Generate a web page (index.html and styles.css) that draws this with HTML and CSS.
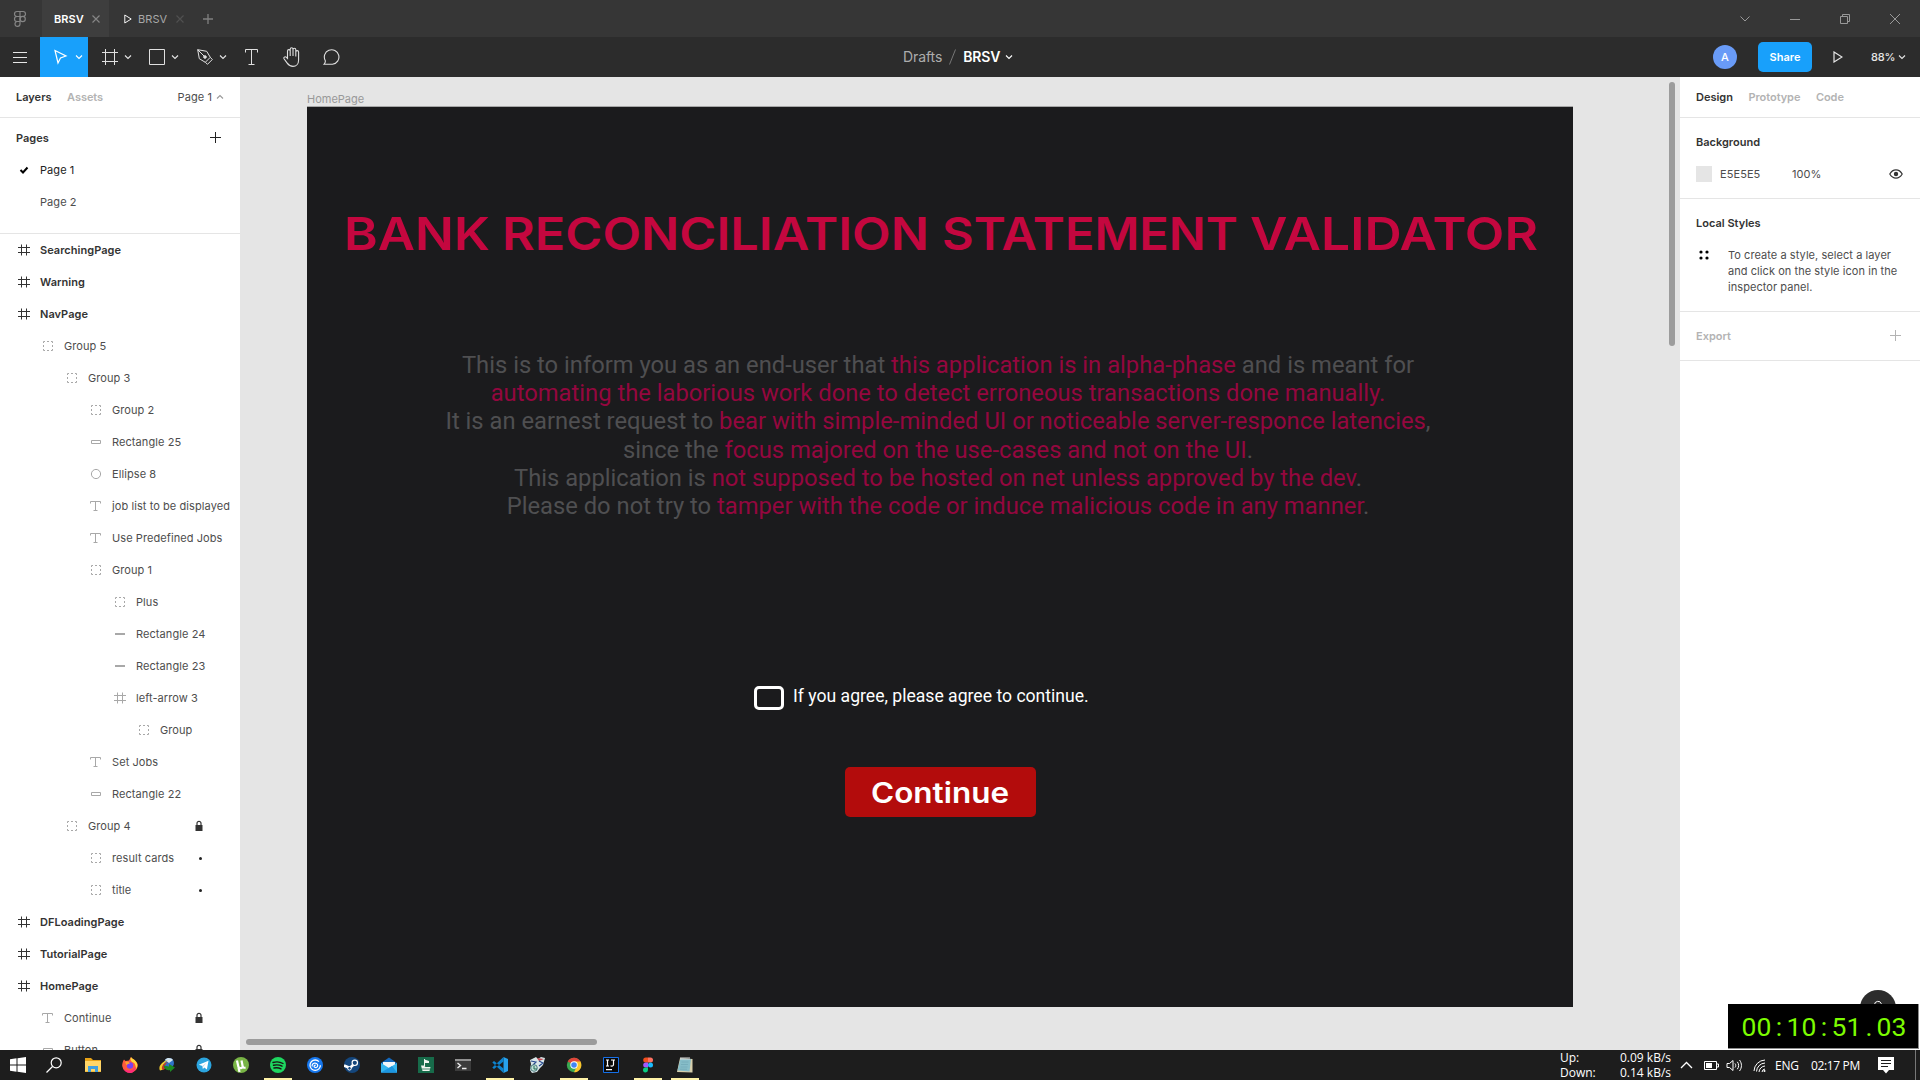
FILE: index.html
```html
<!DOCTYPE html>
<html lang="en">
<head>
<meta charset="utf-8">
<title>BRSV</title>
<link rel="stylesheet" href="styles.css">
</head>
<body>
<svg class="defs" aria-hidden="true">
  <symbol id="i-frame" viewBox="0 0 16 16"><path d="M5.500 2.500v11M10.500 2.500v11M2 5.500h12M2 10.500h12" fill="none" stroke="currentColor"/></symbol>
  <symbol id="i-group" viewBox="0 0 16 16"><path d="M3.500 5V3.500H5M7 3.500h2M11 3.500h1.500V5M12.500 7v2M12.500 11v1.500H11M9 12.500H7M5 12.500H3.500V11M3.500 9V7" fill="none" stroke="currentColor"/></symbol>
  <symbol id="i-rect" viewBox="0 0 16 16"><path d="M3.500 6.500h9v3h-9z" fill="none" stroke="currentColor"/></symbol>
  <symbol id="i-line" viewBox="0 0 16 16"><path d="M3 8h10" stroke="currentColor" stroke-width="2"/></symbol>
  <symbol id="i-ellipse" viewBox="0 0 16 16"><circle cx="8" cy="8" r="4.600" fill="none" stroke="currentColor"/></symbol>
  <symbol id="i-text" viewBox="0 0 16 16"><path d="M2.500 5.500v-2h10v2M7.500 3.500v9M5.500 12.500h4" fill="none" stroke="currentColor"/></symbol>
  <symbol id="i-lock" viewBox="0 0 8 12"><path d="M2 5V3.300a2 2 0 0 1 4 0V5" fill="none" stroke="currentColor" stroke-width="1.200"/><path d="M.5 5h7v6h-7z" fill="currentColor"/></symbol>
  <symbol id="i-chev" viewBox="0 0 8 8"><path d="M1 2.500l3 3 3-3" fill="none" stroke="currentColor" stroke-width="1.100"/></symbol>
  <symbol id="i-play" viewBox="0 0 10 12"><path d="M1 1l8 5-8 5z" fill="none" stroke="currentColor" stroke-width="1.200"/></symbol>
  <symbol id="i-x" viewBox="0 0 8 8"><path d="M.5.5l7 7M7.500.5l-7 7" stroke="currentColor" stroke-width="1.200"/></symbol>
</svg>

<header class="tabs">
  <div class="tab-logo"><svg width="14" height="18" viewBox="0 0 14 18" fill="none" stroke="#858585" stroke-width="1.200"><path d="M7 1.500H4a2.500 2.500 0 0 0 0 5h3zM7 1.500h3a2.500 2.500 0 0 1 0 5H7zM7 6.500H4a2.500 2.500 0 0 0 0 5h3zM7 11.500H4A2.500 2.500 0 1 0 7 14z"/><circle cx="9.700" cy="9" r="2.600"/></svg></div>
  <div class="tab tab-on"><span>BRSV</span><svg width="8" height="8"><use href="#i-x"/></svg></div>
  <div class="tab tab-off"><svg class="tab-play" width="8" height="10"><use href="#i-play"/></svg><span>BRSV</span><svg class="dim" width="8" height="8"><use href="#i-x"/></svg></div>
  <svg class="tab-add" width="10" height="10" viewBox="0 0 10 10"><path d="M5 0v10M0 5h10" stroke="#808080" stroke-width="1.300"/></svg>
  <div class="win">
    <svg width="50" height="20" viewBox="0 0 50 20"><path d="M20.500 7.500l4.500 4.500 4.500-4.500"/></svg>
    <svg width="50" height="20" viewBox="0 0 50 20"><path d="M20 10.500h10"/></svg>
    <svg width="50" height="20" viewBox="0 0 50 20"><path d="M20.500 7.500h7v7h-7zM22.500 7V5.500h7v7H28"/></svg>
    <svg width="50" height="20" viewBox="0 0 50 20"><path d="M20 5l10 10M30 5L20 15"/></svg>
  </div>
</header>

<nav class="toolbar">
  <div class="tool menu"><svg width="14" height="12" viewBox="0 0 14 12"><path d="M0 1.500h14M0 6.500h14M0 11.500h14" stroke="#e6e6e6"/></svg></div>
  <div class="tool active"><svg width="16" height="16" viewBox="0 0 16 16"><path d="M2 1.500l11 5.500-5.500 2-2.500 5z" fill="none" stroke="#fff" stroke-width="1.200"/></svg><svg width="8" height="8"><use href="#i-chev"/></svg></div>
  <div class="tool pair"><svg width="16" height="16" viewBox="0 0 16 16"><path d="M3.500 0v16M12.500 0v16M0 3.500h16M0 12.500h16" stroke="#e0e0e0"/></svg><svg width="8" height="8"><use href="#i-chev"/></svg></div>
  <div class="tool pair"><svg width="16" height="16" viewBox="0 0 16 16"><path d="M.5.5h15v15H.5z" fill="none" stroke="#e0e0e0"/></svg><svg width="8" height="8"><use href="#i-chev"/></svg></div>
  <div class="tool pair"><svg width="16" height="16" viewBox="0 0 16 16" fill="none" stroke="#e0e0e0"><path d="M.7.7l9 1.600 3.600 6-5 5-6-3.600zM.7.7l6.500 6.500M13.300 8.300l2 2.200-4.800 4.800-2.200-2"/><circle cx="8" cy="8" r="1.300" fill="#e0e0e0"/></svg><svg width="8" height="8"><use href="#i-chev"/></svg></div>
  <div class="tool solo type"><svg width="14" height="16" viewBox="0 0 14 16"><path d="M.5 3.500v-3h12v3M6.500 .5v15M3.500 15.500h6" fill="none" stroke="#e0e0e0"/></svg></div>
  <div class="tool solo"><svg width="20" height="20" viewBox="0 0 20 20" fill="none" stroke="#e0e0e0" stroke-width="1.100"><path d="M5.500 11.500V4a1.300 1.300 0 0 1 2.700 0v5V2.200a1.400 1.400 0 0 1 2.800 0V9 2.700a1.400 1.400 0 0 1 2.800 0V9.500 5a1.400 1.400 0 0 1 2.800 0v8c0 4-2.500 6.400-5.600 6.400-3.500 0-4.500-1.400-6-3.500l-3-4.200c-.8-1.200 1-2.600 2.200-1.500z"/></svg></div>
  <div class="tool solo"><svg width="18" height="16" viewBox="0 0 18 16"><path d="M1 15.300c1-1 1.500-2.300 1.300-3.600A7.300 7.300 0 1 1 9.500 15.300z" fill="none" stroke="#e0e0e0" stroke-width="1.100"/></svg></div>
  <div class="crumbs"><span class="muted">Drafts</span><svg class="slash" width="7" height="16" viewBox="0 0 7 16"><path d="M6.500.5l-6 15" stroke="#777"/></svg><strong>BRSV</strong><svg width="8" height="8"><use href="#i-chev"/></svg></div>
  <div class="actions">
    <span class="avatar">A</span><span class="share">Share</span>
    <svg class="present" width="10" height="12"><use href="#i-play"/></svg>
    <span class="pct">88%</span><svg width="8" height="8"><use href="#i-chev"/></svg>
  </div>
</nav>

<main class="work">
  <aside class="left">
    <div class="panel-head"><b>Layers</b><b class="faint">Assets</b><span class="page-pick">Page 1<svg class="flip" width="8" height="8"><use href="#i-chev"/></svg></span></div>
    <section class="pages">
      <div class="pages-head"><b>Pages</b><svg width="11" height="11" viewBox="0 0 11 11"><path d="M5.500 0v11M0 5.500h11" stroke="#222"/></svg></div>
      <div class="row"><svg width="16" height="16" viewBox="0 0 16 16"><path d="M4.500 8l2.500 2.500 4.500-5" fill="none" stroke="#000" stroke-width="2"/></svg><span class="cur">Page 1</span></div>
      <div class="row"><i class="blank"></i><span>Page 2</span></div>
    </section>
    <section class="layers">
      <div class="row top"><svg><use href="#i-frame"/></svg><span>SearchingPage</span></div>
      <div class="row top"><svg><use href="#i-frame"/></svg><span>Warning</span></div>
      <div class="row top"><svg><use href="#i-frame"/></svg><span>NavPage</span></div>
      <div class="row d1"><svg><use href="#i-group"/></svg><span>Group 5</span></div>
      <div class="row d2"><svg><use href="#i-group"/></svg><span>Group 3</span></div>
      <div class="row d3"><svg><use href="#i-group"/></svg><span>Group 2</span></div>
      <div class="row d3"><svg><use href="#i-rect"/></svg><span>Rectangle 25</span></div>
      <div class="row d3"><svg><use href="#i-ellipse"/></svg><span>Ellipse 8</span></div>
      <div class="row d3"><svg><use href="#i-text"/></svg><span>job list to be displayed</span></div>
      <div class="row d3"><svg><use href="#i-text"/></svg><span>Use Predefined Jobs</span></div>
      <div class="row d3"><svg><use href="#i-group"/></svg><span>Group 1</span></div>
      <div class="row d4"><svg><use href="#i-group"/></svg><span>Plus</span></div>
      <div class="row d4"><svg><use href="#i-line"/></svg><span>Rectangle 24</span></div>
      <div class="row d4"><svg><use href="#i-line"/></svg><span>Rectangle 23</span></div>
      <div class="row d4"><svg><use href="#i-frame"/></svg><span>left-arrow 3</span></div>
      <div class="row d5"><svg><use href="#i-group"/></svg><span>Group</span></div>
      <div class="row d3"><svg><use href="#i-text"/></svg><span>Set Jobs</span></div>
      <div class="row d3"><svg><use href="#i-rect"/></svg><span>Rectangle 22</span></div>
      <div class="row d2"><svg><use href="#i-group"/></svg><span>Group 4</span><svg class="lock"><use href="#i-lock"/></svg></div>
      <div class="row d3"><svg><use href="#i-group"/></svg><span>result cards</span><i class="dot"></i></div>
      <div class="row d3"><svg><use href="#i-group"/></svg><span>title</span><i class="dot"></i></div>
      <div class="row top"><svg><use href="#i-frame"/></svg><span>DFLoadingPage</span></div>
      <div class="row top"><svg><use href="#i-frame"/></svg><span>TutorialPage</span></div>
      <div class="row top"><svg><use href="#i-frame"/></svg><span>HomePage</span></div>
      <div class="row d1"><svg><use href="#i-text"/></svg><span>Continue</span><svg class="lock"><use href="#i-lock"/></svg></div>
      <div class="row d1"><svg><use href="#i-rect"/></svg><span>Button</span><svg class="lock"><use href="#i-lock"/></svg></div>
    </section>
  </aside>

  <section class="canvas">
    <div class="frame-name">HomePage</div>
    <div class="artboard">
      <svg class="title" width="1200" height="60"><text y="43"><tspan x="-1" textLength="146" lengthAdjust="spacingAndGlyphs">BANK</tspan> <tspan x="157" textLength="427" lengthAdjust="spacingAndGlyphs">RECONCILIATION</tspan> <tspan x="597" textLength="296" lengthAdjust="spacingAndGlyphs">STATEMENT</tspan> <tspan x="905" textLength="288" lengthAdjust="spacingAndGlyphs">VALIDATOR</tspan></text></svg>
      <p class="notice">This is to inform you as an end-user that <em>this application is in alpha-phase</em> and is meant for<br>
        <em>automating the laborious work done to detect erroneous transactions done manually.</em><br>
        It is an earnest request to <em>bear with simple-minded UI or noticeable server-responce latencies</em>,<br>
        since the <em>focus majored on the use-cases and not on the UI</em>.<br>
        This application is <em>not supposed to be hosted on net unless approved by the dev</em>.<br>
        Please do not try to <em>tamper with the code or induce malicious code in any manner</em>.</p>
      <div class="agree"><span class="box"></span><span class="agree-text">If you agree, please agree to continue.</span></div>
      <div class="btn"><svg width="138" height="50"><text x="0" y="36" textLength="138" lengthAdjust="spacingAndGlyphs">Continue</text></svg></div>
    </div>
    <div class="scroll-y"></div>
    <div class="scroll-x"></div>
  </section>

  <aside class="right">
    <div class="panel-head"><b>Design</b><b class="faint">Prototype</b><b class="faint">Code</b></div>
    <section class="bg">
      <b>Background</b>
      <div class="bg-row"><i class="swatch"></i><span class="hex">E5E5E5</span><span class="alpha">100%</span>
        <svg width="14" height="10" viewBox="0 0 14 10"><path d="M.8 5C2.500 2 4.500.9 7 .9S11.500 2 13.200 5C11.500 8 9.500 9.100 7 9.100S2.500 8 .8 5z" fill="none" stroke="#333" stroke-width="1.200"/><circle cx="7" cy="5" r="2.200" fill="#333"/></svg></div>
    </section>
    <section class="styles">
      <b>Local Styles</b>
      <div class="tip"><svg width="10" height="10" viewBox="0 0 10 10"><circle cx="2" cy="2" r="1.600"/><circle cx="8" cy="2" r="1.600"/><circle cx="2" cy="8" r="1.600"/><circle cx="8" cy="8" r="1.600"/></svg>
        <p>To create a style, select a layer<br>and click on the style icon in the<br>inspector panel.</p></div>
    </section>
    <section class="export"><b>Export</b><svg width="11" height="11" viewBox="0 0 11 11"><path d="M5.500 0v11M0 5.500h11" stroke="#b3b3b3"/></svg></section>
  </aside>
</main>

<div class="help"><svg width="36" height="36" viewBox="0 0 36 36"><path d="M14.500 15a3.500 3.500 0 1 1 5 3c-1 .5-1.500 1-1.500 2.500" fill="none" stroke="#fff"/></svg></div>
<div class="timer"><svg width="190" height="44"><text x="21 36 51 66 81 96 111 126 141 156 171" y="32">00:10:51.03</text></svg></div>

<footer class="taskbar">
  <div class="start"><svg width="16" height="16" viewBox="0 0 16 16"><path d="M0 2.200l6.500-.9v6.200H0zM7.500 1.200L16 0v7.500H7.500zM0 8.500h6.500v6.200L0 13.800zM7.500 8.500H16V16l-8.500-1.200z" fill="#fff"/></svg></div>
  <div class="start"><svg width="16" height="16" viewBox="0 0 16 16"><circle cx="10.200" cy="5.800" r="5" fill="none" stroke="#fff" stroke-width="1.200"/><path d="M6.500 9.500L.5 15.500" stroke="#fff" stroke-width="1.300"/></svg></div>
  <div class="apps">
    <div class="app"><svg viewBox="0 0 16 16"><path d="M0 1h6l2 2h8v12H0z" fill="#e8a317"/><path d="M0 4h16v10.500H0z" fill="#ffd567"/><path d="M3 15V9h10v6h-3v-3H6v3z" fill="#3f9fe0"/></svg></div>
    <div class="app"><svg viewBox="0 0 16 16"><path d="M9 0c1 2 3 2 4.500 4C15 5 16 7 15.800 9a7.900 7.900 0 0 1-15.600 0C0 6.500 1 4 2 2.500L3.500 4 7 3.500z" fill="#ff5a3c"/><path d="M9 0c1 2 3 2 4.500 4 2 2 2.300 5 1 7.500C13 9 14 6 10 5 8.500 3.500 8 2 9 0z" fill="#ffd93b"/><path d="M1 11c2 3 9 4 12-1 0 4-2 6-5 6s-6-2-7-5z" fill="#ff2b7a"/><circle cx="8" cy="8.500" r="3.200" fill="#7a3ff2"/><path d="M3 5c3-1 4 0 5 1.500-2 0-3 1-3.500 2z" fill="#ffa02e"/></svg></div>
    <div class="app"><svg viewBox="0 0 16 16"><circle cx="10" cy="6" r="5" fill="#2f72c9"/><path d="M6 3c2-3 7-2 8 0l-4 3z" fill="#d5e6ef"/><path d="M1 13.500C-1.500 9 4 4 9 3 4.500 6 3 9 4.500 12.500z" fill="#f2ca2d"/><path d="M3.500 13c-2-3 1-7 5.500-8-3 2-4 5-3 7z" fill="#c33a29"/><path d="M4.500 8.500l5.500 1V7l6 3.500-5 4.500v-2c-3.500 1-6-1.500-6.500-4.500z" fill="#1c8a24"/></svg></div>
    <div class="app"><svg viewBox="0 0 16 16"><circle cx="8" cy="8" r="7.500" fill="#2ca5df"/><path d="M2.800 7.800l9.700-4-1.600 8.600-2.600-2-1.400 1.500-.4-2.800z" fill="#fff"/><path d="M6.500 9l4.200-3.500-3.500 4.200-.3 2.200z" fill="#b8d8ea"/></svg></div>
    <div class="app"><svg viewBox="0 0 16 16"><circle cx="8" cy="8" r="8" fill="#78b445"/><path d="M4 3.500l1.300 6c.5 2.500 4.700 2 4.300-.5L8.500 3.500M9.600 9c.4 1.800 1.200 2 3 1.500M5.500 10.500L6.500 15" fill="none" stroke="#fff" stroke-width="2.200"/></svg></div>
    <div class="app on"><svg viewBox="0 0 16 16"><circle cx="8" cy="8" r="8" fill="#1ed760"/><path d="M3 5.500c3.500-1 7-.7 10 1M3.500 8.300c3-.8 6-.5 8.500.9M4 11c2.500-.6 5-.3 7 .8" fill="none" stroke="#191414" stroke-width="1.400" stroke-linecap="round"/></svg></div>
    <div class="app"><svg viewBox="0 0 16 16"><circle cx="8" cy="8" r="8" fill="#1677ee"/><circle cx="8.200" cy="8.200" r="5.200" fill="none" stroke="#fff" stroke-width="1.300" stroke-dasharray="28 5"/><path d="M5.200 9.500c-.8-4 5-4.500 5.500-1.300.3 2.800-3.500 3.200-3.600 1 .1-1.200 1.300-1.200 1.600-.6" fill="none" stroke="#fff" stroke-width="1.200"/></svg></div>
    <div class="app"><svg viewBox="0 0 16 16"><circle cx="8" cy="8" r="8" fill="#14467c"/><path d="M0 8.500L6 11l4.500-4.500" fill="none" stroke="#fff" stroke-width="2.600"/><circle cx="10.800" cy="5.800" r="2.700" fill="#14467c" stroke="#fff" stroke-width="1.200"/><circle cx="5.500" cy="11.300" r="1.800" fill="#14467c" stroke="#fff"/></svg></div>
    <div class="app"><svg viewBox="0 0 16 16"><path d="M0 6l8-5.500L16 6v9.500H0z" fill="#1469bd"/><path d="M2 5h12v6H2z" fill="#f2f6fa"/><path d="M0 6l8 5 8-5v9.500H0z" fill="#35b5ef"/><path d="M0 15.500L11 9l5 6.500z" fill="#1b95e0"/></svg></div>
    <div class="app"><svg viewBox="0 0 16 16"><path d="M0 0h16v16H0z" fill="#176b4a"/><path d="M6.500 2v7" stroke="#eef4ee" fill="none"/><path d="M6.500 2.500L11 4v2L6.500 6zM3 8.500h3l1.500 1.500h5L11.500 14h-7z" fill="#eef4ee"/><path d="M4 12h8" stroke="#176b4a" stroke-width=".8"/></svg></div>
    <div class="app"><svg viewBox="0 0 16 16"><path d="M0 2h16v12H0z" fill="#3c3c3c"/><path d="M0 2h16v2H0z" fill="#929292"/><path d="M2.500 6l3 2.500-3 2.500M7 11.500h4.500" fill="none" stroke="#eee" stroke-width="1.400"/></svg></div>
    <div class="app on"><svg viewBox="0 0 16 16"><path d="M11.500 0L16 2v12l-4.500 2z" fill="#27a2ed"/><path d="M11.500 0v4.500L2 12 .3 10.500zM11.500 16v-4.500L2 4 .3 5.500z" fill="#0d83ce"/></svg></div>
    <div class="app"><svg viewBox="0 0 16 16"><path d="M1 3l6-3 2 2 3-2 4 1-2 7-3 3-3 4-5 1-2-3 1-6z" fill="#d8e6e8"/><path d="M8 1l7 1-5 2z" fill="#c64a55"/><path d="M2 4l5 1-3 3M10 4l4 2-4 3" stroke="#23458c" fill="none" stroke-width="1.100"/><circle cx="5" cy="11" r="3.300" fill="#bfe0d5" stroke="#4d7c80"/><path d="M5 9v3h3" stroke="#216b55" fill="none"/></svg></div>
    <div class="app on"><svg viewBox="0 0 16 16"><circle cx="8" cy="8" r="7.200" fill="#39a852"/><path d="M8 8L1.700 4.400A7.300 7.300 0 0 1 14.700 5H8z" fill="#e0453a"/><path d="M8 4.500h6.500A7.300 7.300 0 0 1 8 15.300L11 9z" fill="#fbc52c"/><circle cx="8" cy="8" r="3.700" fill="#fff"/><circle cx="8" cy="8" r="2.800" fill="#4285f4"/></svg></div>
    <div class="app"><svg viewBox="0 0 16 16"><path d="M.5.5h15v15H.5z" fill="#080808" stroke="#1670e8"/><path d="M3 3h3M4.500 3v6M3 9h3M8 3h4M10.500 3v4.500c0 1.500-1.500 2-3 1.200M3 12.700h6" fill="none" stroke="#fff" stroke-width="1.200"/></svg></div>
    <div class="app on"><svg viewBox="0 0 16 16"><path d="M8 .5H5.700a2.500 2.500 0 0 0 0 5H8z" fill="#f24e1e"/><path d="M8 .5h2.500a2.500 2.500 0 0 1 0 5H8z" fill="#ff7262"/><path d="M8 5.500H5.700a2.500 2.500 0 0 0 0 5H8z" fill="#a259ff"/><circle cx="10.500" cy="8" r="2.500" fill="#1abcfe"/><path d="M8 10.500H5.700A2.500 2.500 0 1 0 8 13z" fill="#0acf83"/></svg></div>
    <div class="app on"><svg viewBox="0 0 16 16"><path d="M3 1l12.500 1v13.500L0 15z" fill="#d7cfac"/><path d="M3.500 1.500L14 2l-1.500 12.500L.5 13.500z" fill="#86bdc8"/><path d="M4.500 5h7M4 7.500h7M3.500 10h7M3 12.200h7" stroke="#74aab8" stroke-width=".8"/><path d="M4 0v3M6 0v3M8 0v3M10 0v3M12 0v3" stroke="#ddd"/></svg></div>
  </div>
  <div class="net"><div><span>Up:</span><span>0.09 kB/s</span></div><div><span>Down:</span><span>0.14 kB/s</span></div></div>
  <svg class="tray" width="90" height="20" viewBox="0 0 90 20" fill="none" stroke="#fff">
    <path d="M1 13l5.500-5.500L12 13" stroke-width="1.300"/>
    <path d="M24.500 6.500h12v8h-12zM37 9h1.500v3H37" /><path d="M26 8h6v5h-6z" fill="#fff" stroke="none"/>
    <path d="M47 8.500h2.500l3.500-3v10l-3.500-3H47zM55 8.500c1 1 1 3 0 4M57.300 6.800c1.800 2.200 1.800 5.200 0 7.400M59.500 5c2.600 3.500 2.600 7.500 0 11"/>
    <path d="M74 16a11.500 11.500 0 0 1 11-11M76.500 16.500A9 9 0 0 1 85 8M79 17a6.500 6.500 0 0 1 6-6M82 17a3.500 3.500 0 0 1 3-3"/><circle cx="84.500" cy="16" r="1" fill="#fff" stroke="none"/>
  </svg>
  <span class="lang">ENG</span><span class="time">02:17 PM</span>
  <svg class="note" width="16" height="17" viewBox="0 0 16 17"><path d="M0 0h16v13h-5l-3 3.500L5 13H0z" fill="#fff"/><path d="M3 3.500h10M3 6.500h10M3 9.500h7" stroke="#1d1d1d"/></svg>
  <i class="edge"></i>
</footer>
</body>
</html>
```
FILE: styles.css
```css
* { box-sizing: border-box; }
body { margin: 0; width: 1920px; height: 1080px; overflow: hidden; display: flex; flex-direction: column; font: 11px/16px Inter, "Liberation Sans", sans-serif; letter-spacing: 0.08px; color: #4d4d4d; background: #fff; }
svg { display: block; flex: none; }
b { font-weight: 600; letter-spacing: 0; color: #333; }
.defs { position: absolute; width: 0; height: 0; }

.tabs { height: 37px; flex: none; display: flex; align-items: center; background: #363636; }
.tab-logo { width: 42px; display: flex; justify-content: center; padding-right: 2px; }
.tab { height: 37px; display: flex; align-items: center; }
.tab-on { width: 67px; padding-left: 12px; gap: 8px; background: #3e3e3e; color: #fff; font-weight: 600; }
.tab-on svg { color: #858585; }
.tab-off { padding-left: 15px; color: #a8a8a8; }
.tab-play { color: #fff; margin-right: 6px; }
.tab-off .dim { margin-left: 9px; color: #505050; }
.tab-add { margin-left: 19px; }
.win { margin-left: auto; display: flex; }
.win path { fill: none; stroke: #999; }

.toolbar { height: 40px; flex: none; display: flex; align-items: center; background: #2c2c2c; color: #e6e6e6; position: relative; }
.tool { height: 40px; display: flex; align-items: center; }
.menu { width: 40px; justify-content: center; }
.active { width: 48px; padding-left: 13px; gap: 6px; background: #18a0fb; color: #fff; }
.pair { width: 48px; gap: 6px; padding-left: 14px; }
.pair + .pair { padding-left: 13px; }
.solo { width: 40px; justify-content: center; }
.crumbs { position: absolute; left: 903px; display: flex; align-items: center; font-size: 14px; letter-spacing: -0.1px; color: #fff; }
.crumbs .muted { color: #acacac; }
.crumbs .slash { margin: 0 7px; }
.crumbs strong { font-weight: 600; }
.crumbs svg { margin-left: 5px; }
.actions { margin-left: auto; display: flex; align-items: center; padding-right: 14px; }
.avatar { width: 24px; height: 24px; border-radius: 50%; background: #699bf7; color: #fff; text-align: center; line-height: 24px; font-weight: 500; }
.share { width: 54px; height: 30px; margin-left: 21px; border-radius: 5px; background: #18a0fb; color: #fff; text-align: center; line-height: 30px; font-weight: 600; letter-spacing: 0; }
.present { margin: 0 28px 0 21px; }
.pct { width: 22px; font-weight: 500; letter-spacing: -0.15px; margin-right: 5px; white-space: nowrap; }

.work { height: 973px; display: flex; }
.left, .right { width: 240px; flex: none; background: #fff; overflow: hidden; }
.panel-head { height: 41px; padding: 0 16px; display: flex; align-items: center; gap: 15.500px; border-bottom: 1px solid #e5e5e5; }
.faint { color: #b3b3b3; letter-spacing: -0.05px; }
.page-pick { margin-left: auto; display: flex; align-items: center; gap: 4px; color: #4d4d4d; }
.flip { transform: rotate(180deg); color: #999; }
.pages { height: 116px; border-bottom: 1px solid #e5e5e5; }
.pages-head { height: 36px; padding: 4px 19px 0 16px; display: flex; align-items: center; justify-content: space-between; }
.pages-head svg { margin-top: -2px; }
.row { height: 32px; padding: 0 36px 0 16px; display: flex; align-items: center; gap: 8px; white-space: nowrap; color: #4d4d4d; }
.row > svg { width: 16px; height: 16px; color: #a8a8a8; }
.row.top { font-weight: 600; letter-spacing: 0.04px; color: #333; }
.row.top > svg { color: #333; }
.cur { color: #222; }
.blank { width: 16px; }
.d1 { padding-left: 40px; }
.d2 { padding-left: 64px; }
.d3 { padding-left: 88px; }
.d4 { padding-left: 112px; }
.d5 { padding-left: 136px; }
.row .lock { width: 8px; height: 12px; margin-left: auto; margin-right: 1px; color: #333; }
.dot { width: 3px; height: 3px; margin-left: auto; margin-right: 2px; border-radius: 50%; background: #222; }

.canvas { width: 1440px; background: #e5e5e5; position: relative; padding: 14px 0 0 67px; }
.frame-name { height: 16px; letter-spacing: 0; color: #999; }
.artboard { width: 1266px; height: 900px; background: #1b1b1d; display: flex; flex-direction: column; box-shadow: 0 -1px #a6a6a6; }
.title { margin: 100px 0 0 38px; overflow: visible; font: 600 45.500px Inter, sans-serif; fill: #c4073f; letter-spacing: 0; }
.notice { height: 169px; margin: 84px 0 0; padding-right: 4px; text-align: center; font: 23.750px/28.200px Roboto, sans-serif; letter-spacing: 0; color: #4f4f51; white-space: nowrap; }
.notice em { font-style: normal; color: #94073f; }
.agree { display: flex; margin: 165px 0 0 447px; height: 26px; }
.box { width: 30px; height: 24px; margin-top: 1px; border: 3px solid #fff; border-radius: 5px; }
.agree-text { margin-left: 9px; font: 17.600px/22px Roboto, sans-serif; letter-spacing: 0; color: #fff; }
.btn { width: 191px; height: 50px; margin: 56px 0 0 538px; padding-left: 26px; border-radius: 5px; background: #b30c0c; font: 600 28px Inter, sans-serif; letter-spacing: 0; fill: #fff; }
.scroll-y { position: absolute; right: 5px; top: 5px; width: 6px; height: 264px; border-radius: 3px; background: #9c9c9c; }
.scroll-x { position: absolute; left: 6px; bottom: 5px; width: 351px; height: 6px; border-radius: 3px; background: #9c9c9c; }

.bg { height: 81px; padding: 16px 16px 0; border-bottom: 1px solid #e5e5e5; }
.bg b, .styles b { display: block; }
.bg-row { display: flex; align-items: center; height: 16px; margin-top: 16px; }
.swatch { width: 16px; height: 16px; background: #e5e5e5; }
.hex { width: 72px; margin-left: 8px; }
.bg-row svg { margin-left: auto; margin-right: 1px; }
.styles { height: 113px; padding: 16px 16px 0; border-bottom: 1px solid #e5e5e5; }
.tip { display: flex; margin-top: 16px; padding-left: 3px; }
.tip svg { margin-top: 3px; }
.tip p { margin: 0 0 0 19px; white-space: nowrap; letter-spacing: 0.06px; }
.export { height: 49px; padding: 0 19px 0 16px; display: flex; align-items: center; justify-content: space-between; border-bottom: 1px solid #e5e5e5; }
.export b { color: #b3b3b3; }
.export svg { margin-top: -1px; }

.help { position: absolute; left: 1860px; top: 990px; width: 36px; height: 36px; border-radius: 50%; background: #2c2c2c; }
.timer { position: absolute; left: 1728px; top: 1004px; width: 191px; height: 45px; background: #000; border: solid #8c8c8c; border-width: 0 1px 1px 0; }
.timer text { font: 26.500px Roboto, sans-serif; letter-spacing: 0; fill: #7cfc00; text-anchor: middle; }

.taskbar { height: 30px; flex: none; display: flex; align-items: center; background: #1d1d1d; color: #fff; font: 12px/15px "Open Sans", sans-serif; letter-spacing: 0; }
.start { width: 36px; display: flex; justify-content: center; }
.apps { display: flex; padding-left: 2px; }
.app { width: 28px; height: 30px; margin: 0 4px 0 5px; display: flex; align-items: center; justify-content: center; }
.app svg { width: 16px; height: 16px; }
.on { box-shadow: inset 0 -2px #fff3a8; }
.net { width: 111px; margin-left: auto; }
.net div { display: flex; justify-content: space-between; }
.tray { margin-left: 9px; }
.lang { margin-left: 5px; width: 36px; letter-spacing: -0.2px; }
.time { width: 49px; white-space: nowrap; letter-spacing: -0.35px; }
.note { margin-left: 18px; }
.edge { width: 1px; height: 30px; margin: 0 4px 0 21px; background: #777; }
```
